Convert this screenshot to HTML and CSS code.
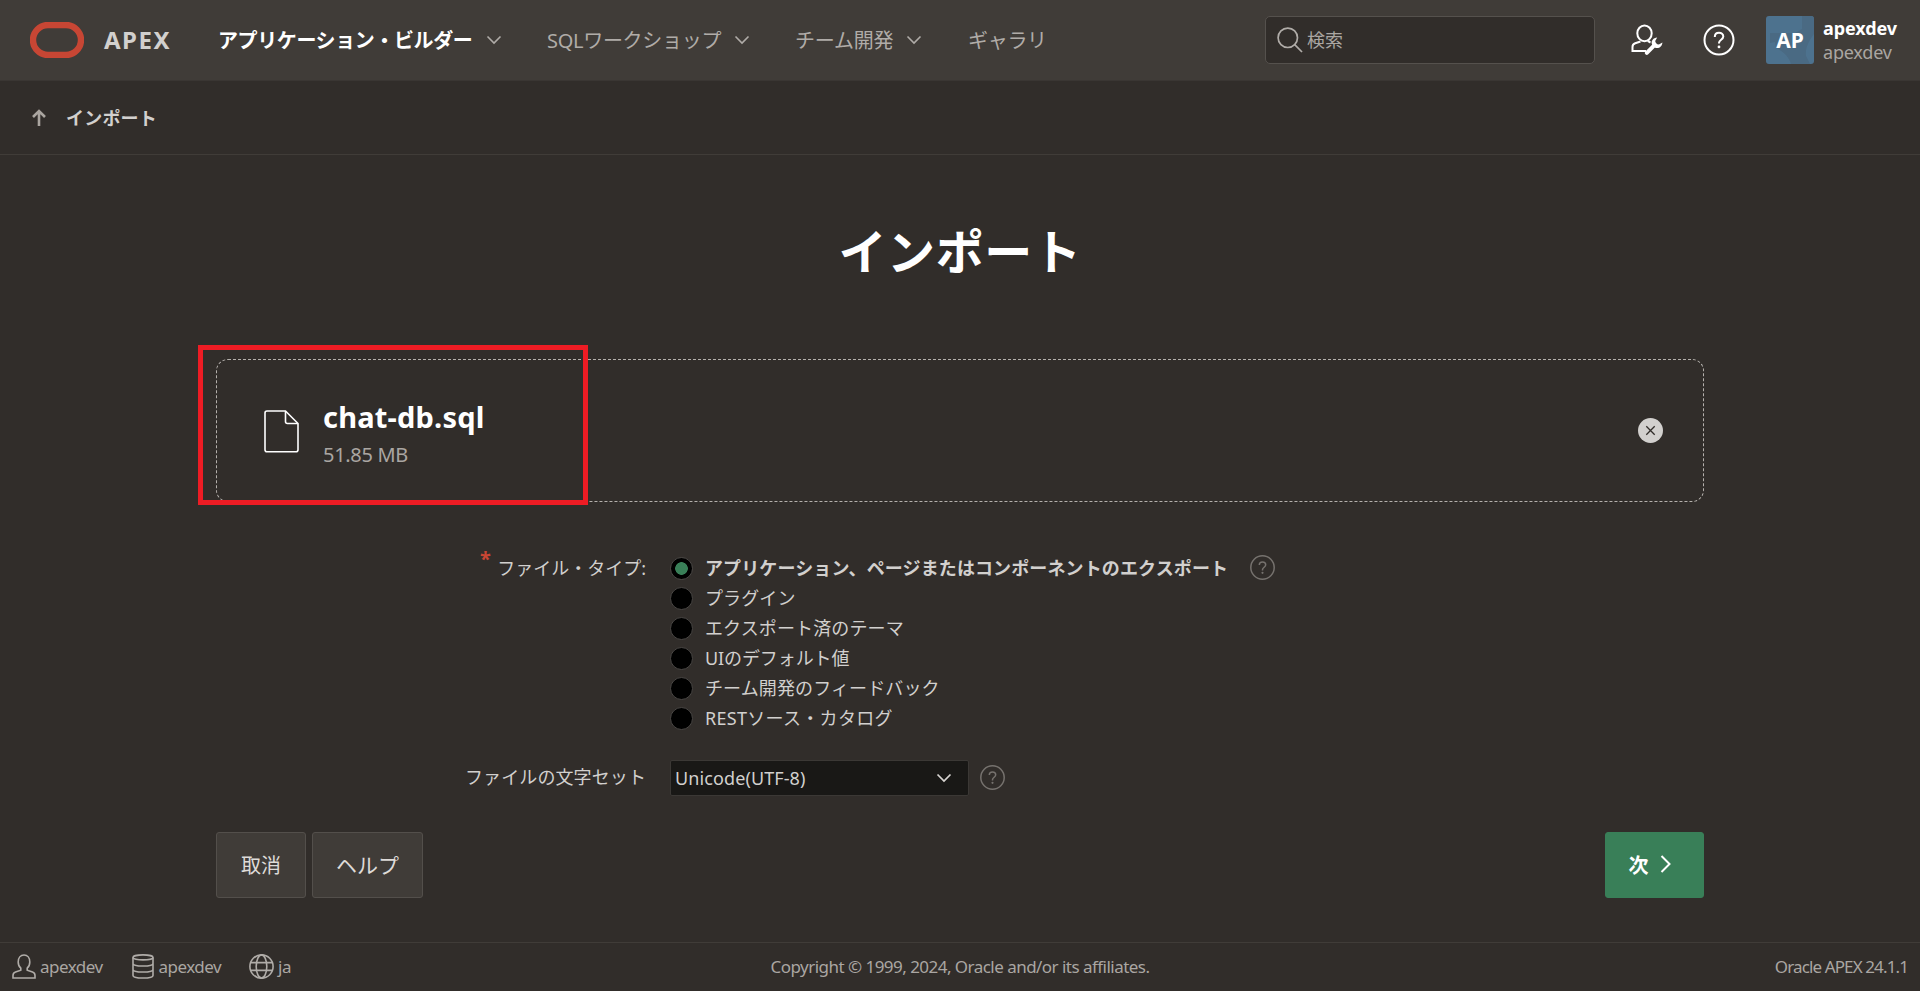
FILE: index.html
```html
<!DOCTYPE html>
<html lang="ja">
<head>
<meta charset="utf-8">
<title>インポート</title>
<link rel="stylesheet" href="styles.css">
</head>
<body>
<header class="header">
  <a class="brand">
    <svg class="brand-logo" width="54" height="36" viewBox="0 0 54 36"><rect x="3" y="3" width="48" height="30" rx="15" fill="none" stroke="#c74634" stroke-width="6.4"/></svg>
    <span class="brand-name">APEX</span>
  </a>
  <nav class="nav">
    <a class="nav-item current"><span>アプリケーション・ビルダー</span><svg class="chev" viewBox="0 0 16 10"><path d="M1.500 1.500 8 8l6.500-6.500"/></svg></a>
    <a class="nav-item sql"><span>SQLワークショップ</span><svg class="chev" viewBox="0 0 16 10"><path d="M1.500 1.500 8 8l6.500-6.500"/></svg></a>
    <a class="nav-item team"><span>チーム開発</span><svg class="chev" viewBox="0 0 16 10"><path d="M1.500 1.500 8 8l6.500-6.500"/></svg></a>
    <a class="nav-item gallery"><span>ギャラリ</span></a>
  </nav>
  <div class="search">
    <svg width="26" height="26" viewBox="0 0 26 26" fill="none" stroke="#b0aca8" stroke-width="1.700"><circle cx="10.800" cy="10.800" r="9.700"/><path d="m17.700 17.700 7.300 7.300"/></svg>
    <span>検索</span>
  </div>
  <svg class="admin" width="32" height="32" viewBox="0 0 32 32" fill="none" stroke="#fff" stroke-width="2"><path d="M15 27H1.500v-4c0-2 .8-3 2.700-3.700l5.300-1.800"/><ellipse cx="13.500" cy="9.300" rx="7.200" ry="7.900"/><path d="M17.500 16v1.500l2 1"/><path d="M15.800 28.800 24 20.600" stroke-width="4" stroke-linecap="round"/><path d="M26.200 13.500c-3.900.2-6.400 3.300-5.200 6.900l3.200 3.400c3.800 1.100 7-1.300 7.200-5.300l-3.500 2.100-2.900-.6-.8-2.900z" fill="#fff" stroke="none"/></svg>
  <svg class="help-top" width="32" height="32" viewBox="0 0 32 32" fill="none" stroke="#fff" stroke-width="2"><circle cx="16" cy="16" r="14.500"/><path d="M11.800 13c0-2.700 1.800-4.300 4.200-4.300s4.300 1.600 4.300 3.900c0 3.100-4.300 3.200-4.300 6.300v.6"/><circle cx="16" cy="22.900" r="1.400" fill="#fff" stroke="none"/></svg>
  <div class="account">
    <span class="avatar"><svg width="48" height="48" viewBox="0 0 48 48"><path d="M4 17h25l7-4V0h12v18c-6 8-9 15-8 22l4 8H25c-2-7-7-12-15-16l-1-6-5 1z" fill="#4a6a83"/></svg><b>AP</b></span>
    <span class="account-text"><b>apexdev</b><span>apexdev</span></span>
  </div>
</header>

<div class="crumbs">
  <svg width="14" height="17" viewBox="0 0 14 17" fill="none" stroke="#aaa5a0" stroke-width="2.600"><path d="M7 17V2M1 8l6-6 6 6"/></svg>
  <h1 class="crumb">インポート</h1>
</div>

<main class="main">
  <h2 class="title">インポート</h2>
  <section class="dropzone">
    <svg class="file" width="35" height="43" viewBox="0 0 35 43" fill="none" stroke="#fff" stroke-width="1.600"><path d="M3 1h18.500L34 13.500v26.300a2 2 0 0 1-2 2H3a2 2 0 0 1-2-2V3a2 2 0 0 1 2-2z"/><path d="M21.500 1v10.500a2 2 0 0 0 2 2H34"/></svg>
    <div class="file-text"><strong>chat-db.sql</strong><span>51.85 MB</span></div>
    <svg class="remove" width="25" height="25" viewBox="0 0 25 25"><circle cx="12.500" cy="12.500" r="12.500" fill="#d2d0ce"/><path d="m8.300 8.300 8.400 8.400m0-8.400-8.400 8.400" stroke="#312d2a" stroke-width="1.300"/></svg>
    <div class="highlight"></div>
  </section>

  <div class="form-row types">
    <div class="label"><i class="required">*</i>ファイル・タイプ:</div>
    <div class="radios">
      <div class="radio on"><i></i><span>アプリケーション、ページまたはコンポーネントのエクスポート</span></div>
      <div class="radio"><i></i><span>プラグイン</span></div>
      <div class="radio"><i></i><span>エクスポート済のテーマ</span></div>
      <div class="radio mixed"><i></i><span>UIのデフォルト値</span></div>
      <div class="radio"><i></i><span>チーム開発のフィードバック</span></div>
      <div class="radio rest"><i></i><span>RESTソース・カタログ</span></div>
    </div>
    <svg class="help" viewBox="0 0 25 25"><circle cx="12.500" cy="12.500" r="11.700"/><path d="M9.300 10.100c0-2 1.300-3.200 3.200-3.200s3.200 1.200 3.200 2.900c0 2.400-3.200 2.500-3.200 5v.600"/><circle class="dot" cx="12.500" cy="17.800" r="1.100"/></svg>
  </div>
  <div class="form-row charset">
    <div class="label">ファイルの文字セット</div>
    <div class="select"><span>Unicode(UTF-8)</span><svg width="16" height="10" viewBox="0 0 16 10" fill="none" stroke="#d8d5d2" stroke-width="1.700"><path d="m1.500 1.500 6.500 6.500 6.500-6.500"/></svg></div>
    <svg class="help" viewBox="0 0 25 25"><circle cx="12.500" cy="12.500" r="11.700"/><path d="M9.300 10.100c0-2 1.300-3.200 3.200-3.200s3.200 1.200 3.200 2.900c0 2.400-3.200 2.500-3.200 5v.600"/><circle class="dot" cx="12.500" cy="17.800" r="1.100"/></svg>
  </div>

  <div class="buttons">
    <button class="btn cancel">取消</button>
    <button class="btn help-btn">ヘルプ</button>
    <button class="btn next"><span>次</span><svg width="12" height="20" viewBox="0 0 12 20" fill="none" stroke="#fff" stroke-width="2"><path d="m1.500 2 8 8-8 8"/></svg></button>
  </div>
</main>

<footer class="footer">
  <div class="footer-left">
    <span class="foot-item user"><svg width="24" height="25" viewBox="0 0 24 25" fill="none" stroke="#b0aca8" stroke-width="1.600"><path d="M1 24v-2.600c0-1.700.8-2.700 2.500-3.300l5.300-1.900v-2C7.100 12.700 6.200 10.500 6.200 7.900 6.200 3.800 8.500 1 12 1s5.800 2.800 5.800 6.900c0 2.600-.9 4.800-2.600 6.300v2l5.300 1.900c1.700.6 2.500 1.600 2.500 3.300V24z"/></svg>apexdev</span>
    <span class="foot-item db"><svg width="22" height="25" viewBox="0 0 22 25" fill="none" stroke="#b0aca8" stroke-width="1.600"><ellipse cx="11" cy="3.400" rx="10" ry="2.500"/><path d="M1 3.400v18C1 23 5.500 24 11 24s10-1 10-2.600v-18M1 9.400C1 11 5.500 12 11 12s10-1 10-2.600M1 15.400C1 17 5.500 18 11 18s10-1 10-2.600"/></svg>apexdev</span>
    <span class="foot-item lang"><svg width="25" height="25" viewBox="0 0 25 25" fill="none" stroke="#b0aca8" stroke-width="1.600"><circle cx="12.500" cy="12.500" r="11.600"/><ellipse cx="12.500" cy="12.500" rx="5.300" ry="11.600"/><path d="M1.500 8.600h22M1.500 16.400h22"/></svg>ja</span>
  </div>
  <div class="copyright">Copyright © 1999, 2024, Oracle and/or its affiliates.</div>
  <div class="version">Oracle APEX 24.1.1</div>
</footer>
</body>
</html>
```
FILE: styles.css
```css
* { box-sizing: border-box; }
body {
  margin: 0;
  height: 991px;
  display: flex;
  flex-direction: column;
  overflow: hidden;
  background: #312d2a;
  color: #d2d0ce;
  font-family: "Noto Sans", "Noto Sans CJK JP", sans-serif;
  font-size: 18px;
  white-space: nowrap;
}
svg { flex: none; display: block; }
h1, h2 { margin: 0; }

.header {
  height: 81px;
  flex: none;
  display: flex;
  align-items: center;
  padding: 0 21px 1px 30px;
  background: #403c38;
  border-bottom: 1px solid #3a3633;
}
.brand { display: flex; align-items: center; width: 188px; }
.brand-name { margin-left: 20px; font-size: 24px; font-weight: 700; letter-spacing: 1.5px; }
.nav { display: flex; align-items: center; font-size: 20px; color: #b0aca8; }
.nav-item { display: flex; align-items: center; justify-content: space-between; }
.nav-item span { padding-bottom: 1px; }
.nav-item.current { color: #fff; font-weight: 700; width: 284px; letter-spacing: -.4px; }
.nav-item.sql { width: 203px; margin-left: 45px; letter-spacing: -.3px; }
.nav-item.team { width: 127px; margin-left: 45px; letter-spacing: -.2px; }
.nav-item.gallery { margin-left: 46px; letter-spacing: -.3px; }
.chev { width: 16px; height: 10px; fill: none; stroke: #b0aca8; stroke-width: 1.6; }
.search {
  display: flex;
  align-items: center;
  gap: 4px;
  width: 330px;
  height: 48px;
  margin-left: auto;
  padding-left: 11px;
  border: 1px solid #55514d;
  border-radius: 5px;
  background: #312d2a;
  color: #aaa6a2;
}
.search span { padding-bottom: 2px; }
.admin { margin-left: 36px; }
.help-top { margin-left: 40px; }
.account { display: flex; width: 133px; margin-left: 31px; }
.avatar {
  display: flex;
  flex: none;
  position: relative;
  width: 48px;
  height: 48px;
  border-radius: 3px;
  overflow: hidden;
  background: #4d728e;
  color: #fff;
}
.avatar b { position: absolute; inset: 0; font-size: 21px; line-height: 49px; text-align: center; }
.account-text { display: flex; flex-direction: column; margin-left: 9px; line-height: 24px; color: #aaa6a2; letter-spacing: -.2px; }
.account-text b { color: #fff; font-weight: 700; letter-spacing: -.1px; }

.crumbs {
  height: 74px;
  flex: none;
  display: flex;
  align-items: center;
  gap: 20px;
  padding-left: 32px;
  border-bottom: 1px solid #403c38;
}
.crumb { padding-bottom: 2px; font-size: 18px; font-weight: 700; letter-spacing: .2px; }

.main { flex: 1; padding: 0 216px; }
.title { margin-top: 60px; height: 72px; line-height: 74px; font-size: 48px; color: #fff; text-align: center; letter-spacing: .6px; }
.dropzone {
  position: relative;
  display: flex;
  align-items: center;
  height: 143px;
  margin-top: 72px;
  padding: 0 40px 0 47px;
  border: 1px dashed #b5b1ad;
  border-radius: 12px;
}
.file { margin-top: 1px; }
.file-text { display: flex; flex-direction: column; margin: 3px 0 0 24px; font-size: 20px; line-height: 31px; color: #aaa6a2; }
.file-text strong { font-size: 29px; line-height: 44px; color: #fff; letter-spacing: .2px; }
.file-text span { letter-spacing: -.3px; }
.remove { margin-left: auto; }
.highlight { position: absolute; left: -19px; top: -15px; width: 390px; height: 160px; border: 5px solid #ed1c24; }

.form-row { display: flex; }
.label { position: relative; width: 430px; text-align: right; line-height: 30px; }
.required { position: absolute; left: 264px; top: -9px; font-style: normal; font-size: 20px; font-weight: 700; color: #c74634; }
.types { margin-top: 51px; }
.radios { margin-left: 24px; }
.radio { display: flex; align-items: center; gap: 12px; height: 30px; letter-spacing: .12px; }
.radio span { padding-bottom: 2px; }
.radio i { width: 23px; height: 23px; border: 1.5px solid #4a4745; border-radius: 50%; background: #000; }
.radio.mixed { letter-spacing: -.1px; }
.radio.rest { letter-spacing: .3px; }
.radio.on { font-weight: 700; }
.radio.on i { background: radial-gradient(circle, #397f58 6px, #000 6.6px); }
.help { width: 25px; height: 25px; margin-top: 2px; fill: none; stroke: #76726e; stroke-width: 1.5; }
.help .dot { fill: #76726e; stroke: none; }
.types .help { margin-left: 22px; }
.charset { margin-top: 27px; }
.charset .label { line-height: 35px; letter-spacing: .1px; }
.select {
  display: flex;
  align-items: center;
  justify-content: space-between;
  width: 299px;
  height: 36px;
  margin-left: 24px;
  padding: 0 16px 0 4px;
  border: 1px solid #3b3835;
  border-radius: 2px;
  background: #191816;
  letter-spacing: .1px;
}
.charset .help { margin: 5px 0 0 11px; }

.buttons { display: flex; gap: 6px; margin-top: 36px; }
.btn {
  display: flex;
  align-items: center;
  justify-content: center;
  height: 66px;
  padding: 0 0 2px;
  border: 1px solid #534f4b;
  border-radius: 3px;
  background: #403c38;
  color: #dedbd8;
  font: 20px "Noto Sans", "Noto Sans CJK JP", sans-serif;
}
.cancel { width: 90px; }
.help-btn { width: 111px; font-size: 21px; }
.next { width: 99px; margin-left: auto; padding-right: 9px; gap: 11px; border-color: #397f58; background: #397f58; color: #fff; font-weight: 700; }

.footer {
  display: grid;
  grid-template-columns: 1fr auto 1fr;
  align-items: center;
  flex: none;
  height: 49px;
  padding: 0 12px 1px;
  border-top: 1px solid #403c38;
  font-size: 17px;
  color: #aaa6a2;
  letter-spacing: -.53px;
}
.footer-left { display: flex; }
.foot-item { display: flex; align-items: center; gap: 4px; }
.db { margin-left: 29px; gap: 5px; }
.lang { margin-left: 28px; }
.version { text-align: right; letter-spacing: -.88px; }
```
